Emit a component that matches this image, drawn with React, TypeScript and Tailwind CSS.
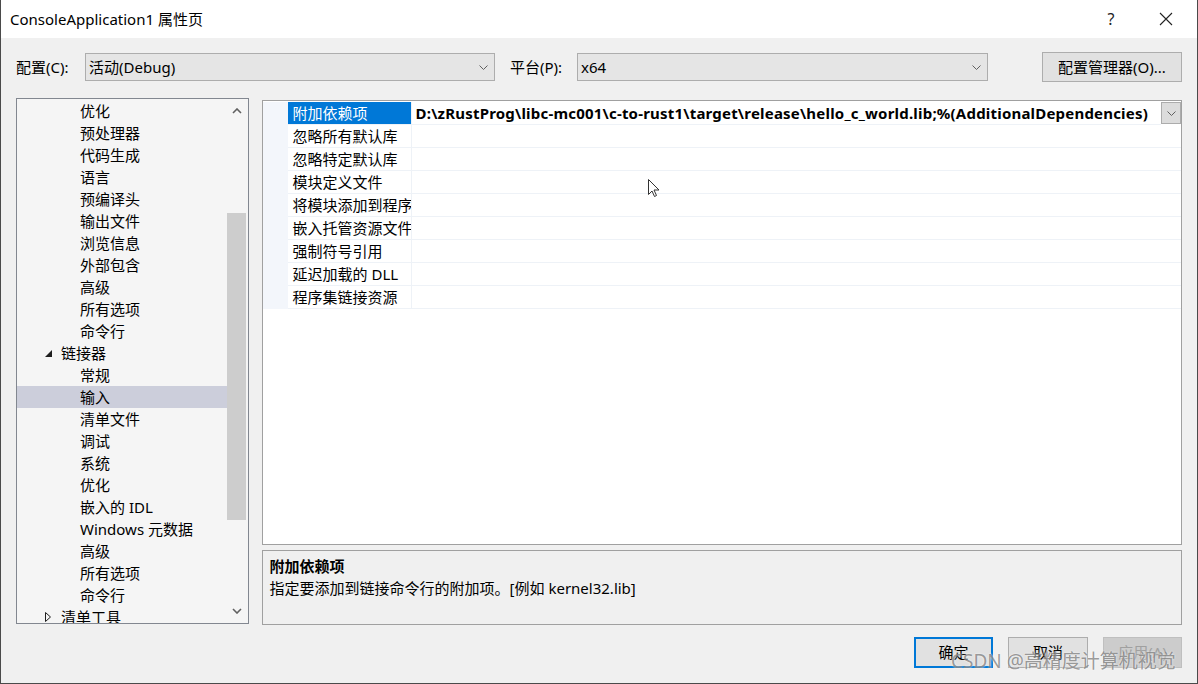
import React from "react";

const FONT = { fontFamily: '"Noto Sans", "Noto Sans CJK SC", sans-serif' };

function Chevron({ className = "" }: { className?: string }) {
  return (
    <svg width="9" height="5" viewBox="0 0 9 5" className={className}>
      <polyline points="0.5,0.5 4.5,4.5 8.5,0.5" fill="none" stroke="#606060" strokeWidth="1" />
    </svg>
  );
}

const treeItems: { label: string; level: number; expander?: "open" | "closed"; selected?: boolean }[] = [
  { label: "优化", level: 2 },
  { label: "预处理器", level: 2 },
  { label: "代码生成", level: 2 },
  { label: "语言", level: 2 },
  { label: "预编译头", level: 2 },
  { label: "输出文件", level: 2 },
  { label: "浏览信息", level: 2 },
  { label: "外部包含", level: 2 },
  { label: "高级", level: 2 },
  { label: "所有选项", level: 2 },
  { label: "命令行", level: 2 },
  { label: "链接器", level: 1, expander: "open" },
  { label: "常规", level: 2 },
  { label: "输入", level: 2, selected: true },
  { label: "清单文件", level: 2 },
  { label: "调试", level: 2 },
  { label: "系统", level: 2 },
  { label: "优化", level: 2 },
  { label: "嵌入的 IDL", level: 2 },
  { label: "Windows 元数据", level: 2 },
  { label: "高级", level: 2 },
  { label: "所有选项", level: 2 },
  { label: "命令行", level: 2 },
  { label: "清单工具", level: 1, expander: "closed" },
];

const gridRows = [
  "附加依赖项",
  "忽略所有默认库",
  "忽略特定默认库",
  "模块定义文件",
  "将模块添加到程序",
  "嵌入托管资源文件",
  "强制符号引用",
  "延迟加载的 DLL",
  "程序集链接资源",
];

export default function App() {
  return (
    <div
      className="relative w-[1198px] h-[684px] bg-[#f0f0f0] border-x border-b border-[#4a4a4a] flex flex-col text-black text-[15px] overflow-hidden"
      style={FONT}
    >
      {/* Title bar */}
      <div className="h-[38px] bg-white flex items-center pl-[9px] shrink-0">
        <span className="flex-1 leading-none">ConsoleApplication1 属性页</span>
        <span className="w-[20px] text-center text-[16px] text-[#222] mr-[38px]">?</span>
        <svg width="14" height="14" viewBox="0 0 14 14" className="mr-[24px]">
          <path d="M1 1 L13 13 M13 1 L1 13" stroke="#222" strokeWidth="1.1" />
        </svg>
      </div>

      {/* Config row */}
      <div className="h-[30px] mt-[14px] flex items-center pl-[15px] pr-[15px] shrink-0">
        <span className="w-[69px]">配置(C):</span>
        <div className="w-[410px] h-[28px] bg-[#e5e5e5] border border-[#adadad] flex items-center pl-[3px] pr-[6px]">
          <span className="flex-1">活动(Debug)</span>
          <Chevron />
        </div>
        <span className="ml-[15px] w-[67px]">平台(P):</span>
        <div className="w-[411px] h-[28px] bg-[#e5e5e5] border border-[#adadad] flex items-center pl-[3px] pr-[6px]">
          <span className="flex-1">x64</span>
          <Chevron />
        </div>
        <div className="flex-1" />
        <div className="w-[140px] h-[30px] bg-[#e1e1e1] border border-[#adadad] flex items-center justify-center">
          配置管理器(O)...
        </div>
      </div>

      {/* Main area */}
      <div className="flex mt-[16px] px-[15px] h-[527px] shrink-0">
        {/* Tree */}
        <div className="w-[233px] h-[526px] border border-[#828790] bg-[#f5f5f5] flex overflow-hidden">
          <div className="flex-1 flex flex-col overflow-hidden pt-[1px]">
            {treeItems.map((it, i) => (
              <div
                key={i}
                className={`h-[22px] shrink-0 flex items-center whitespace-nowrap ${it.selected ? "bg-[#cccedb]" : ""}`}
              >
                {it.level === 1 ? (
                  <div className="flex items-center pl-[28px]">
                    <div className="w-[16px] flex items-center">
                      {it.expander === "open" ? (
                        <svg width="7" height="7" viewBox="0 0 7 7">
                          <polygon points="7,0 7,7 0,7" fill="#1e1e1e" />
                        </svg>
                      ) : (
                        <svg width="6" height="10" viewBox="0 0 6 10">
                          <polygon points="0.5,0.5 5.5,5 0.5,9.5" fill="none" stroke="#1e1e1e" strokeWidth="1" />
                        </svg>
                      )}
                    </div>
                    <span>{it.label}</span>
                  </div>
                ) : (
                  <span className="pl-[63px]">{it.label}</span>
                )}
              </div>
            ))}
          </div>
          {/* Scrollbar */}
          <div className="w-[21px] flex flex-col items-center">
            <div className="h-[24px] flex items-center justify-center">
              <svg width="10" height="6" viewBox="0 0 10 6">
                <polyline points="1,5 5,1 9,5" fill="none" stroke="#606060" strokeWidth="1.6" />
              </svg>
            </div>
            <div className="h-[90px]" />
            <div className="w-[19px] h-[307px] bg-[#cdcdcd] mr-[1px]" />
            <div className="flex-1" />
            <div className="h-[24px] flex items-center justify-center">
              <svg width="10" height="6" viewBox="0 0 10 6">
                <polyline points="1,1 5,5 9,1" fill="none" stroke="#606060" strokeWidth="1.6" />
              </svg>
            </div>
          </div>
        </div>

        {/* Right column */}
        <div className="ml-[13px] w-[922px] flex flex-col">
          {/* Property grid */}
          <div className="mt-[2px] h-[446px] border border-[#a0a0a0] bg-white flex flex-col pt-[1px]">
            {gridRows.map((name, i) => (
              <div key={i} className="h-[23px] flex shrink-0">
                <div className="w-[25px] bg-[#f3f6fb] shrink-0" />
                <div
                  className={`w-[124px] shrink-0 flex items-center pl-[5px] whitespace-nowrap overflow-hidden border-r border-b border-[#eef2f7] ${
                    i === 0 ? "bg-[#0078d7] text-white" : ""
                  }`}
                >
                  {name}
                </div>
                <div className="flex-1 flex items-center pl-[4px] whitespace-nowrap overflow-hidden border-b border-[#eef2f7]">
                  {i === 0 && (
                    <span className="font-bold flex-1 tracking-[0.2px]">
                      D:\zRustProg\libc-mc001\c-to-rust1\target\release\hello_c_world.lib;%(AdditionalDependencies)
                    </span>
                  )}
                </div>
                {i === 0 && (
                  <div className="w-[20px] h-[22px] bg-[#dcdcdc] border border-[#acacac] flex items-center justify-center shrink-0">
                    <Chevron />
                  </div>
                )}
              </div>
            ))}
            <div className="flex-1" />
          </div>

          {/* Description */}
          <div className="mt-[5px] h-[75px] border border-[#a0a0a0] bg-[#f0f0f0] px-[7px] pt-[4px] flex flex-col">
            <div className="font-bold h-[22px] leading-[22px]">附加依赖项</div>
            <div className="h-[22px] leading-[22px]">指定要添加到链接命令行的附加项。[例如 kernel32.lib]</div>
          </div>
        </div>
      </div>

      {/* Buttons */}
      <div className="mt-[12px] flex justify-end pr-[15px] gap-[15px]">
        <div className="w-[79px] h-[31px] bg-[#e1e1e1] border-2 border-[#0078d7] flex items-center justify-center">
          确定
        </div>
        <div className="w-[80px] h-[31px] bg-[#e1e1e1] border border-[#adadad] flex items-center justify-center">
          取消
        </div>
        <div className="w-[79px] h-[31px] bg-[#cccccc] border border-[#bfbfbf] flex items-center justify-center text-[#a0a0a0]">
          应用(A)
        </div>
      </div>

      {/* Mouse cursor */}
      <svg className="absolute left-[647px] top-[179px]" width="12" height="19" viewBox="0 0 12 19">
        <path d="M0.5 0.5 L0.5 15.5 L4 12 L6.5 17.5 L8.5 16.5 L6 11 L11 11 Z" fill="white" stroke="#333" strokeWidth="1" />
      </svg>

      {/* Watermark */}
      <div
        className="absolute left-[950px] top-[652px] text-[19px] leading-none text-[rgba(100,100,100,0.65)] whitespace-nowrap pointer-events-none"
        style={{ textShadow: "0 0 2px rgba(255,255,255,0.9)" }}
      >
        CSDN @高精度计算机视觉
      </div>
    </div>
  );
}
